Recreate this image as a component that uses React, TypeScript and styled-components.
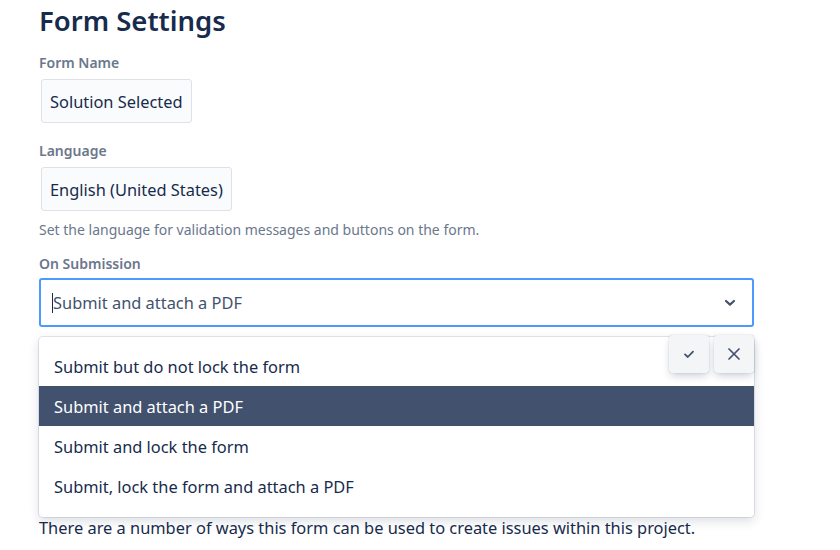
import styled, { createGlobalStyle } from "styled-components";

const GlobalStyle = createGlobalStyle`
  body {
    margin: 0;
    background: #ffffff;
    font-family: "Noto Sans", "Open Sans", sans-serif;
    color: #172b4d;
  }
`;

const Page = styled.div`
  padding: 0 0 0 39px;
  width: 715px;
  display: flex;
  flex-direction: column;
`;

const Title = styled.h1`
  margin: 3px 0 0;
  font-size: 27.5px;
  font-weight: 600;
  line-height: 36px;
  color: #172b4d;
`;

const Label = styled.label<{ $top: number }>`
  display: block;
  font-size: 14px;
  font-weight: 600;
  color: #6b778c;
  line-height: 18px;
  margin-top: ${(p) => p.$top}px;
`;

const ReadBox = styled.div`
  align-self: flex-start;
  margin: 7px 0 0 2px;
  padding: 0 8px;
  height: 42px;
  display: flex;
  align-items: center;
  background: #fafbfc;
  border: 1px solid #dfe1e6;
  border-radius: 3px;
  font-size: 16.4px;
  color: #172b4d;
`;

const Helper = styled.div`
  margin-top: 10px;
  font-size: 14px;
  color: #6b778c;
  line-height: 18px;
`;

const SelectWrap = styled.div`
  position: relative;
  margin-top: 5px;
`;

const SelectBox = styled.div`
  height: 45px;
  border: 2px solid #4c9aff;
  border-radius: 3px;
  display: flex;
  align-items: center;
  justify-content: space-between;
  padding: 0 16px 0 11px;
  font-size: 16.4px;
  color: #42526e;
`;

const Caret = styled.span`
  display: inline-block;
  width: 1px;
  height: 20px;
  background: #172b4d;
`;

const SelectText = styled.span`
  display: flex;
  align-items: center;
`;

const Menu = styled.div`
  position: absolute;
  top: 59px;
  left: 0;
  right: 0;
  background: #ffffff;
  border-radius: 4px;
  box-shadow: 0 0 0 1px rgba(9, 30, 66, 0.1), 0 4px 11px rgba(9, 30, 66, 0.15);
  padding: 9px 0 11px;
`;

const Option = styled.div<{ $selected?: boolean }>`
  height: 40px;
  display: flex;
  align-items: center;
  padding: 0 15px;
  font-size: 16.4px;
  color: ${(p) => (p.$selected ? "#ffffff" : "#172b4d")};
  background: ${(p) => (p.$selected ? "#42526e" : "transparent")};
`;

const Actions = styled.div`
  position: absolute;
  top: 57px;
  right: 0;
  display: flex;
  gap: 5px;
  z-index: 2;
`;

const ActionButton = styled.button`
  width: 40px;
  height: 38px;
  border: none;
  border-radius: 3px;
  background: #f4f5f7;
  box-shadow: 0 4px 8px -2px rgba(9, 30, 66, 0.25), 0 0 1px rgba(9, 30, 66, 0.31);
  display: flex;
  align-items: center;
  justify-content: center;
  padding: 0;
  color: #42526e;
`;

const Footer = styled.p`
  margin: 189px 0 0;
  font-size: 16.4px;
  color: #172b4d;
  line-height: 24px;
`;

const options = [
  "Submit but do not lock the form",
  "Submit and attach a PDF",
  "Submit and lock the form",
  "Submit, lock the form and attach a PDF",
];

export default function App() {
  return (
    <>
      <GlobalStyle />
      <Page>
        <Title>Form Settings</Title>
        <Label $top={15}>Form Name</Label>
        <ReadBox>Solution Selected</ReadBox>
        <Label $top={19}>Language</Label>
        <ReadBox>English (United States)</ReadBox>
        <Helper>Set the language for validation messages and buttons on the form.</Helper>
        <Label $top={16}>On Submission</Label>
        <SelectWrap>
          <SelectBox>
            <SelectText>
              <Caret />
              Submit and attach a PDF
            </SelectText>
            <svg width="12" height="8" viewBox="0 0 12 8">
              <path d="M2 2l4 3.6L10 2" fill="none" stroke="#42526e" strokeWidth="2.2" strokeLinecap="round" strokeLinejoin="round" />
            </svg>
          </SelectBox>
          <Menu>
            {options.map((o) => (
              <Option key={o} $selected={o === "Submit and attach a PDF"}>
                {o}
              </Option>
            ))}
          </Menu>
          <Actions>
            <ActionButton>
              <svg width="14" height="14" viewBox="0 0 14 14">
                <path d="M3 7.4l2.8 2.6L11 4.6" fill="none" stroke="#42526e" strokeWidth="1.8" strokeLinecap="round" strokeLinejoin="round" />
              </svg>
            </ActionButton>
            <ActionButton>
              <svg width="14" height="14" viewBox="0 0 14 14">
                <path d="M2 2l10 10M12 2L2 12" fill="none" stroke="#42526e" strokeWidth="1.7" strokeLinecap="round" />
              </svg>
            </ActionButton>
          </Actions>
        </SelectWrap>
        <Footer>There are a number of ways this form can be used to create issues within this project.</Footer>
      </Page>
    </>
  );
}
